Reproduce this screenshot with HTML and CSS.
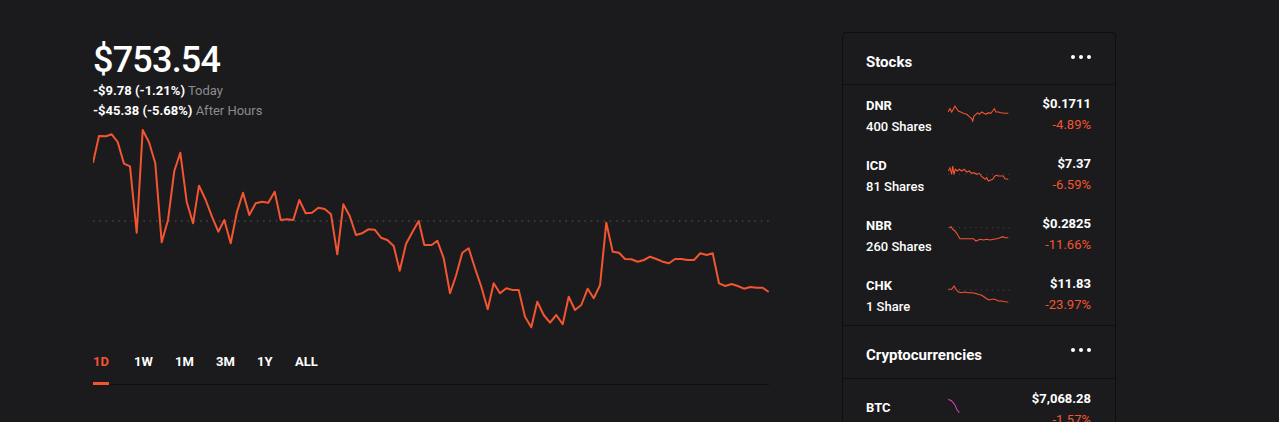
FILE: index.html
```html
<!DOCTYPE html>
<html lang="en">
<head>
  <meta charset="UTF-8" />
  <meta name="viewport" content="width=device-width, initial-scale=1" />
  <title>Portfolio</title>
  <link rel="stylesheet" href="styles.css">
</head>
<body>
  <div class="page">
    <main class="main">
      <h1 class="price">$753.54</h1>
      <div class="change"><strong>-$9.78 (-1.21%)</strong> <span>Today</span></div>
      <div class="change"><strong>-$45.38 (-5.68%)</strong> <span>After Hours</span></div>

      <svg class="chart" viewBox="93 125 676 210" width="676" height="210">
        <line x1="93" y1="221" x2="769" y2="221" stroke="#5b5b5e" stroke-width="1.2" stroke-dasharray="1.5 4.8" />
        <polyline fill="none" stroke="#f45531" stroke-width="2" stroke-linejoin="round" points="
          93,162.7 99,136 106,136.3 111.7,134.3 117.7,142 124,163.7 130,166.3 136.7,232.7 142.7,130 149,142.3
          155.3,163.3 161.7,242.3 168,220 174.3,171 180.3,152.7 186.7,201.7 193,223.3 199,185.7 205.7,200 212,216.7
          218.3,231.7 224.3,220 230.7,243.3 237,211.7 243,192.7 249.3,215 255.7,203.3 262,201.7 268.3,202.7 274.7,191.7
          280.7,220 287,219.3 293.3,220 299.3,200 305.7,213.3 312,212.7 318.3,207.7 324.7,209 331,214.3 337.3,254.3
          343.3,204.3 349.7,216 356,235 362,233.3 368.3,229.3 374.7,229.7 381,237.7 387.3,240 393.7,246 399.7,270.7
          406,244 412.3,232.3 418.7,221 424.3,245 431.7,245 437.3,240.7 443.7,258.3 450,293.3 456,275.7 462.3,252.7
          468.7,248.3 475,268.3 481.3,286.7 487.7,309.3 493.7,283.3 500,293.3 506.3,288.3 512.7,290 518.7,290 525,316.7
          531.3,327.3 537.3,301.7 543.7,315 550,322.7 556.3,315 562.7,324.3 568.7,296.7 575,310 581.3,305 587.7,288.7
          593.7,298.3 600,285.3 606.3,222.7 612.7,251.7 619,252.7 625,259 631.3,259.3 637.7,261.7 644,260 650,256.7
          656.3,259 662.7,261.7 669,263.3 675,259 681.3,259 687.7,260 694,260 700.3,253.3 706.7,255 712.7,253.3
          719,283.3 725.3,286 731.7,284 737.7,286 744,288.7 750.3,287 756.7,287.7 762.7,287.7 768.7,292" />
      </svg>

      <nav class="ranges">
        <a class="range active"><span>1D</span></a>
        <a class="range"><span>1W</span></a>
        <a class="range"><span>1M</span></a>
        <a class="range"><span>3M</span></a>
        <a class="range"><span>1Y</span></a>
        <a class="range"><span>ALL</span></a>
      </nav>
    </main>

    <aside class="card">
      <div class="card-head">
        <h3>Stocks</h3>
        <span class="more"><i></i><i></i><i></i></span>
      </div>

      <div class="row">
        <div class="name"><b>DNR</b><span>400 Shares</span></div>
        <svg class="spark" viewBox="0 0 62 30" width="62" height="30">
          <polyline fill="none" stroke="#f45531" stroke-width="1.1" points="0,13 2,9.7 3.7,13 5.3,10.3 7,7 8.7,9.7 10.3,12 12.7,13 15.3,14.3 18.7,15.3 21.3,17.7 23.7,19.7 24.7,22 26,17 28,15.3 29.7,13.7 31.3,15.3 33.7,13 36,14.3 38,15.3 40.3,13.7 42.7,14.3 44.7,12 46.3,9.7 48,13 50.3,13 53,13.7 57,14.3 60.3,14.3" />
        </svg>
        <div class="quote"><b>$0.1711</b><span>-4.89%</span></div>
      </div>

      <div class="row">
        <div class="name"><b>ICD</b><span>81 Shares</span></div>
        <svg class="spark" viewBox="0 0 62 30" width="62" height="30">
          <line x1="0" y1="15.3" x2="62" y2="15.3" stroke="#4a4a4d" stroke-width="1" stroke-dasharray="1 4.5" />
          <polyline fill="none" stroke="#f45531" stroke-width="1.1" points="0.3,12 2,8.7 3.7,15.3 4.7,7 6,15.3 7.3,10.3 9.3,12 11.3,10.3 13.7,12 16,10.3 18.7,13 21.3,12 23.7,14.3 26,13.7 28.7,15.3 31.3,14.3 33.7,17.7 35.3,18.7 37,20.3 38.7,18.7 40.3,22 42.7,21 44.7,20.3 46.3,17.7 48,16.3 50.3,17 53.7,17 55.3,17 57,19.7 60.3,20.3" />
        </svg>
        <div class="quote"><b>$7.37</b><span>-6.59%</span></div>
      </div>

      <div class="row">
        <div class="name"><b>NBR</b><span>260 Shares</span></div>
        <svg class="spark" viewBox="0 0 62 30" width="62" height="30">
          <line x1="0" y1="8.7" x2="62" y2="8.7" stroke="#4a4a4d" stroke-width="1" stroke-dasharray="1 4.5" />
          <polyline fill="none" stroke="#f45531" stroke-width="1.1" points="1.3,8.7 3,7.7 4.7,10.3 7,12 8.7,14.3 10.3,17 12,19.7 25.3,19.7 28,22 30.3,21 32.7,20.3 35.3,21 38.7,20.3 42,21 45.3,20.3 48.7,19.7 52,18.7 54.7,17.7 57,18.7 60.3,18.7" />
        </svg>
        <div class="quote"><b>$0.2825</b><span>-11.66%</span></div>
      </div>

      <div class="row">
        <div class="name"><b>CHK</b><span>1 Share</span></div>
        <svg class="spark" viewBox="0 0 62 30" width="62" height="30">
          <line x1="0" y1="11" x2="62" y2="11" stroke="#4a4a4d" stroke-width="1" stroke-dasharray="1 4.5" />
          <polyline fill="none" stroke="#f45531" stroke-width="1.1" points="0.3,10.3 3.7,10.3 6,7 8,10.3 10.3,13 13.7,13.7 17,13 20.3,13.7 23.7,13.7 27,14.3 30.3,15.3 33.7,16.3 36,17.7 38.7,19.7 41.3,21 43.7,20.3 47,20.3 50.3,22 53.7,22 57,22.7 60.3,23" />
        </svg>
        <div class="quote"><b>$11.83</b><span>-23.97%</span></div>
      </div>

      <div class="card-head divided">
        <h3>Cryptocurrencies</h3>
        <span class="more"><i></i><i></i><i></i></span>
      </div>

      <div class="row crypto">
        <div class="name"><b>BTC</b></div>
        <svg class="spark" viewBox="0 0 62 30" width="62" height="30">
          <polyline fill="none" stroke="#d63fb4" stroke-width="1.1" points="0.3,6.3 3.7,8 7,12 8.7,16.3 11.3,19.7" />
        </svg>
        <div class="quote"><b>$7,068.28</b><span>-1.57%</span></div>
      </div>
    </aside>
  </div>
</body>
</html>
```

FILE: styles.css
```css
body {
  margin: 0;
  background-color: #1b1b1d;
  color: #fff;
  font-family: Roboto, "Liberation Sans", sans-serif;
  overflow: hidden;
}
.page {
  display: flex;
  align-items: flex-start;
  padding: 32px 0 0 93px;
}
.main {
  width: 676px;
  margin-right: 73px;
}
.price {
  margin: 8px 0 1px;
  font-size: 36px;
  font-weight: 500;
  line-height: 40px;
  letter-spacing: -0.8px;
}
.change {
  font-size: 13px;
  line-height: 20px;
}
.change strong {
  font-weight: 700;
}
.change span {
  color: #8c8c8e;
}
.chart {
  display: block;
  margin-top: 4px;
}
.ranges {
  display: flex;
  margin-top: 19px;
  border-bottom: 1px solid #0e0e0f;
}
.range {
  width: 41px;
  font-size: 13px;
  font-weight: 700;
  line-height: 16px;
  margin-bottom: -1px;
}
.range:nth-child(5) {
  width: 38px;
}
.range span {
  display: inline-block;
  padding-bottom: 12px;
  border-bottom: 3px solid transparent;
}
.range.active {
  color: #f45531;
}
.range.active span {
  border-bottom-color: #f45531;
}
.card {
  width: 272px;
  border: 1px solid #0e0e0f;
  border-radius: 4px;
  background-color: #1b1b1d;
}
.card-head {
  display: flex;
  align-items: center;
  justify-content: space-between;
  height: 51px;
  padding: 0 24px 0 23px;
  border-bottom: 1px solid #0e0e0f;
}
.card-head.divided {
  border-top: 1px solid #0e0e0f;
  height: 52px;
}
.card-head h3 {
  margin: 6px 0 0;
  font-size: 15px;
  font-weight: 700;
}
.more {
  display: flex;
  gap: 4px;
  margin-top: -4px;
}
.more i {
  width: 4px;
  height: 4px;
  border-radius: 50%;
  background-color: #fff;
}
.row {
  display: flex;
  align-items: flex-start;
  height: 60px;
  padding: 0 24px 0 23px;
}
.name {
  display: flex;
  flex-direction: column;
  width: 82px;
  padding-top: 10px;
  font-size: 13px;
  font-weight: 500;
  line-height: 21px;
}
.name b {
  font-weight: 700;
}
.spark {
  display: block;
  margin-top: 14px;
}
.quote {
  flex: 1;
  display: flex;
  flex-direction: column;
  align-items: flex-end;
  padding-top: 11px;
  font-size: 13px;
  line-height: 26px;
}
.quote b {
  font-weight: 700;
  line-height: 16px;
}
.quote span {
  color: #f45531;
}
.crypto .name {
  padding-top: 18px;
}
.crypto .quote {
  padding-top: 12px;
}
```
